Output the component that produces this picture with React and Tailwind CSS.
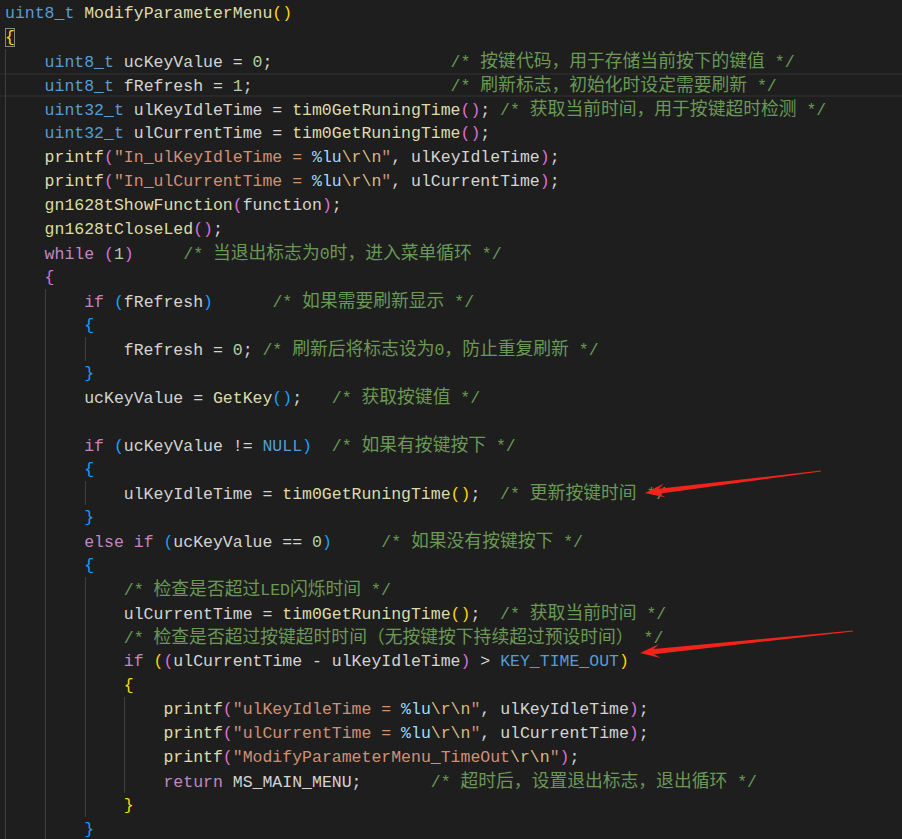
import React from "react";

// token colours (VS Code Dark+)
const D = "text-[#d4d4d4]";
const K = "text-[#569cd6]";
const F = "text-[#dcdcaa]";
const P = "text-[#c586c0]";
const N = "text-[#b5cea8]";
const S = "text-[#ce9178]";
const E = "text-[#d7ba7d]";
const M = "text-[#9cdcfe]";
const C = "text-[#6a9955]";
const B1 = "text-[#ffd700]";
const B2 = "text-[#da70d6]";
const B3 = "text-[#179fff]";

const lines = [
  [[K, "uint8_t"], [D, " "], [F, "ModifyParameterMenu"], [B1, "()"]],
  [[B1, "{", "box"]],
  [[D, "    "], [K, "uint8_t"], [D, " ucKeyValue = "], [N, "0"], [D, ";                  "], [C, "/* 按键代码，用于存储当前按下的键值 */"]],
  [[D, "    "], [K, "uint8_t"], [D, " fRefresh = "], [N, "1"], [D, ";                    "], [C, "/* 刷新标志，初始化时设定需要刷新 */"]],
  [[D, "    "], [K, "uint32_t"], [D, " ulKeyIdleTime = "], [F, "tim0GetRuningTime"], [B2, "()"], [D, "; "], [C, "/* 获取当前时间，用于按键超时检测 */"]],
  [[D, "    "], [K, "uint32_t"], [D, " ulCurrentTime = "], [F, "tim0GetRuningTime"], [B2, "()"], [D, ";"]],
  [[D, "    "], [F, "printf"], [B2, "("], [S, "\"In_ulKeyIdleTime = "], [M, "%lu"], [E, "\\r\\n"], [S, "\""], [D, ", ulKeyIdleTime"], [B2, ")"], [D, ";"]],
  [[D, "    "], [F, "printf"], [B2, "("], [S, "\"In_ulCurrentTime = "], [M, "%lu"], [E, "\\r\\n"], [S, "\""], [D, ", ulCurrentTime"], [B2, ")"], [D, ";"]],
  [[D, "    "], [F, "gn1628tShowFunction"], [B2, "("], [D, "function"], [B2, ")"], [D, ";"]],
  [[D, "    "], [F, "gn1628tCloseLed"], [B2, "()"], [D, ";"]],
  [[D, "    "], [P, "while"], [D, " "], [B2, "("], [N, "1"], [B2, ")"], [D, "     "], [C, "/* 当退出标志为0时，进入菜单循环 */"]],
  [[D, "    "], [B2, "{"]],
  [[D, "        "], [P, "if"], [D, " "], [B3, "("], [D, "fRefresh"], [B3, ")"], [D, "      "], [C, "/* 如果需要刷新显示 */"]],
  [[D, "        "], [B3, "{"]],
  [[D, "            fRefresh = "], [N, "0"], [D, "; "], [C, "/* 刷新后将标志设为0，防止重复刷新 */"]],
  [[D, "        "], [B3, "}"]],
  [[D, "        ucKeyValue = "], [F, "GetKey"], [B3, "()"], [D, ";   "], [C, "/* 获取按键值 */"]],
  [],
  [[D, "        "], [P, "if"], [D, " "], [B3, "("], [D, "ucKeyValue != "], [K, "NULL"], [B3, ")"], [D, "  "], [C, "/* 如果有按键按下 */"]],
  [[D, "        "], [B3, "{"]],
  [[D, "            ulKeyIdleTime = "], [F, "tim0GetRuningTime"], [B1, "()"], [D, ";  "], [C, "/* 更新按键时间 */"]],
  [[D, "        "], [B3, "}"]],
  [[D, "        "], [P, "else if"], [D, " "], [B3, "("], [D, "ucKeyValue == "], [N, "0"], [B3, ")"], [D, "     "], [C, "/* 如果没有按键按下 */"]],
  [[D, "        "], [B3, "{"]],
  [[D, "            "], [C, "/* 检查是否超过LED闪烁时间 */"]],
  [[D, "            ulCurrentTime = "], [F, "tim0GetRuningTime"], [B1, "()"], [D, ";  "], [C, "/* 获取当前时间 */"]],
  [[D, "            "], [C, "/* 检查是否超过按键超时时间（无按键按下持续超过预设时间） */"]],
  [[D, "            "], [P, "if"], [D, " "], [B1, "("], [B2, "("], [D, "ulCurrentTime - ulKeyIdleTime"], [B2, ")"], [D, " > "], [K, "KEY_TIME_OUT"], [B1, ")"]],
  [[D, "            "], [B1, "{"]],
  [[D, "                "], [F, "printf"], [B2, "("], [S, "\"ulKeyIdleTime = "], [M, "%lu"], [E, "\\r\\n"], [S, "\""], [D, ", ulKeyIdleTime"], [B2, ")"], [D, ";"]],
  [[D, "                "], [F, "printf"], [B2, "("], [S, "\"ulCurrentTime = "], [M, "%lu"], [E, "\\r\\n"], [S, "\""], [D, ", ulCurrentTime"], [B2, ")"], [D, ";"]],
  [[D, "                "], [F, "printf"], [B2, "("], [S, "\"ModifyParameterMenu_TimeOut"], [E, "\\r\\n"], [S, "\""], [B2, ")"], [D, ";"]],
  [[D, "                "], [P, "return"], [D, " MS_MAIN_MENU;       "], [C, "/* 超时后，设置退出标志，退出循环 */"]],
  [[D, "            "], [B1, "}"]],
  [[D, "        "], [B3, "}"]],
];

// indent guide columns per line
const guideAt = (i) => {
  const g = [];
  if (i >= 2) g.push(0);
  if (i >= 12) g.push(4);
  if (i === 14 || i === 20 || (i >= 24 && i <= 33)) g.push(8);
  if (i >= 29 && i <= 32) g.push(12);
  return g;
};

const guideLeft = {
  0: "left-[5px]",
  4: "left-[45px]",
  8: "left-[85px]",
  12: "left-[124px]",
};

const renderComment = (text) =>
  text.split(/([^\x00-\x7f]+)/).map((part, k) =>
    /[^\x00-\x7f]/.test(part) ? (
      <span key={k} className="text-[17.8px]">
        {part}
      </span>
    ) : (
      part
    )
  );

const Arrow = ({ x1, y1, x2, y2 }) => {
  const dx = x2 - x1;
  const dy = y2 - y1;
  const len = Math.hypot(dx, dy);
  const ux = dx / len;
  const uy = dy / len;
  const nx = -uy;
  const ny = ux;
  const pt = (bx, by, back, side) =>
    `${bx - ux * back + nx * side},${by - uy * back + ny * side}`;
  const pts = [
    pt(x1, y1, 0, 0.4),
    pt(x2, y2, 14, 2.6),
    pt(x2, y2, 20, 7),
    pt(x2, y2, 0, 0),
    pt(x2, y2, 20, -7),
    pt(x2, y2, 14, -2.6),
    pt(x1, y1, 0, -0.4),
  ].join(" ");
  return <polygon points={pts} fill="#f2231b" />;
};

const App = () => {
  return (
    <div className="relative w-full h-[839px] overflow-hidden bg-[#1e1e1e] font-['Liberation_Mono','Noto_Sans_CJK_SC',monospace] text-[16.5px]">
      <div className="flex flex-col pt-[1px]">
        {lines.map((tokens, i) => (
          <div
            key={i}
            className={`relative h-[24px] leading-[26px] whitespace-pre pl-[5px] ${
              i === 3 ? "shadow-[inset_0_2px_0_#282828,inset_0_-2px_0_#282828]" : ""
            }`}
          >
            {guideAt(i).map((c) => (
              <span
                key={c}
                className={`absolute top-0 bottom-0 w-px bg-[#404040] ${guideLeft[c]}`}
              />
            ))}
            {tokens.map(([cls, text, extra], k) =>
              extra === "box" ? (
                <span key={k} className={`${cls} outline outline-1 outline-[#888888] -outline-offset-1`}>
                  {text}
                </span>
              ) : (
                <span key={k} className={cls}>
                  {cls === C ? renderComment(text) : text}
                </span>
              )
            )}
          </div>
        ))}
      </div>
      <svg
        className="absolute inset-0 pointer-events-none"
        width="902"
        height="839"
        viewBox="0 0 902 839"
      >
        <Arrow x1={821} y1={471} x2={645} y2={493} />
        <Arrow x1={853} y1={631} x2={640} y2={653} />
      </svg>
    </div>
  );
};

export default App;
